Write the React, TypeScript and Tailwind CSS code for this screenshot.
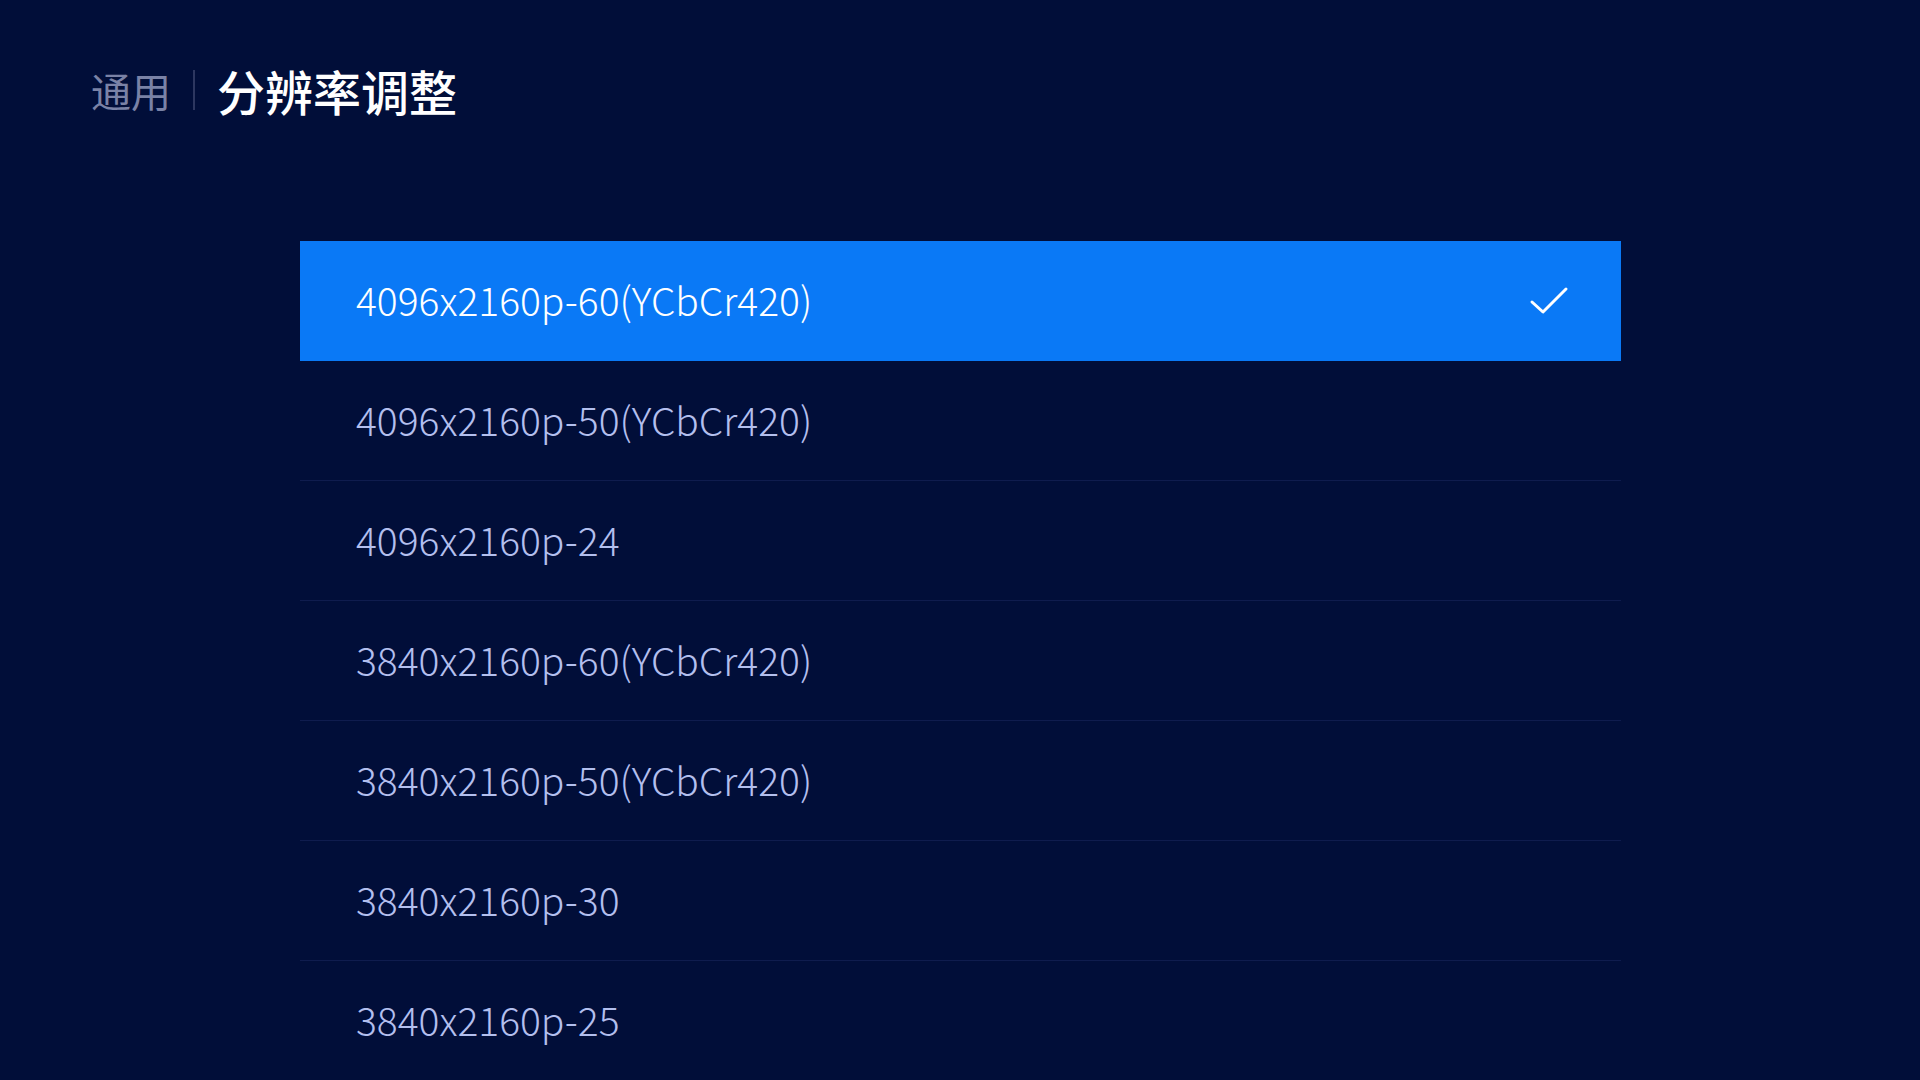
const RESOLUTIONS = [
  "4096x2160p-60(YCbCr420)",
  "4096x2160p-50(YCbCr420)",
  "4096x2160p-24",
  "3840x2160p-60(YCbCr420)",
  "3840x2160p-50(YCbCr420)",
  "3840x2160p-30",
  "3840x2160p-25",
];

const SELECTED = 0;

function CheckIcon() {
  return (
    <svg width="40" height="30" viewBox="0 0 40 30" fill="none">
      <polyline
        points="3,16 14,26 37,3"
        stroke="white"
        strokeWidth="3"
        strokeLinecap="round"
        strokeLinejoin="round"
      />
    </svg>
  );
}

export default function App() {
  return (
    <div
      className="h-screen w-full overflow-hidden bg-[#010e39]"
      style={{ fontFamily: '"Noto Sans CJK SC", "Noto Sans", sans-serif' }}
    >
      {/* Breadcrumb header */}
      <div className="flex h-[48px] items-center pl-[91px] pt-[66px] box-content">
        <span className="text-[40px] leading-none text-[#7a82a6]">通用</span>
        <span className="mx-[22px] h-[40px] w-[2px] bg-[#2d3760]" />
        <span className="text-[48px] leading-none font-medium text-white">
          分辨率调整
        </span>
      </div>

      {/* Resolution list */}
      <div className="ml-[300px] mt-[127px] w-[1321px]">
        {RESOLUTIONS.map((r, i) =>
          i === SELECTED ? (
            <div
              key={r}
              className="flex h-[120px] items-center justify-between bg-[#0a79f6] pl-[56px] pr-[52px]"
            >
              <span className="pb-[3px] text-[39px] font-light text-white">{r}</span>
              <CheckIcon />
            </div>
          ) : (
            <div
              key={r}
              className="flex h-[120px] items-center border-b border-[#0f1c4e] pl-[56px]"
            >
              <span className="pb-[3px] text-[39px] font-light text-[#b3bfee]">{r}</span>
            </div>
          ),
        )}
      </div>
    </div>
  );
}
